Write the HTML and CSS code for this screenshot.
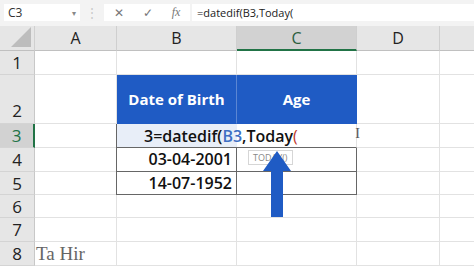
FILE: index.html
```html
<!DOCTYPE html>
<html lang="en">
<head>
    <meta charset="UTF-8">
    <title>Datedif</title>
    <link rel="stylesheet" href="styles.css">
</head>
<body>
    <div class="topbar">
        <div class="namebox">C3 <span class="drop">▾</span></div>
        <div class="dots">⋮</div>
        <div class="buttons">
            <span class="btn">✕</span>
            <span class="btn">✓</span>
            <span class="btn fx">fx</span>
        </div>
        <div class="formula">=datedif(B3,Today(</div>
    </div>

    <div class="sheet">
        <div class="corner"><span class="tri"></span></div>
        <div class="colhead">A</div>
        <div class="colhead">B</div>
        <div class="colhead sel">C</div>
        <div class="colhead">D</div>
        <div class="colhead last"></div>

        <div class="rowhead">1</div>
        <div class="cell"></div><div class="cell"></div><div class="cell"></div><div class="cell"></div><div class="cell last"></div>

        <div class="rowhead tall">2</div>
        <div class="cell"></div>
        <div class="cell head divider">Date of Birth</div>
        <div class="cell head">Age</div>
        <div class="cell"></div><div class="cell last"></div>

        <div class="rowhead sel">3</div>
        <div class="cell"></div>
        <div class="cell edit"><span>3=datedif(</span><span class="ref">B3</span><span>,Today</span><span class="paren">(</span><span class="caret"></span></div>
        <div class="cell edit-c"><span class="ibeam">I</span></div>
        <div class="cell"></div><div class="cell last"></div>

        <div class="rowhead">4</div>
        <div class="cell"></div>
        <div class="cell data">03-04-2001</div>
        <div class="cell data c4">
            <span class="tip">TODAY()</span>
            <svg class="arrow" width="30" height="66" viewBox="0 0 30 66">
                <path d="M15 0 L29 20 L21 20 L21 66 L9 66 L9 20 L1 20 Z" fill="#1f5bc4"/>
            </svg>
        </div>
        <div class="cell"></div><div class="cell last"></div>

        <div class="rowhead">5</div>
        <div class="cell"></div>
        <div class="cell data">14-07-1952</div>
        <div class="cell data"></div>
        <div class="cell"></div><div class="cell last"></div>

        <div class="rowhead">6</div>
        <div class="cell"></div><div class="cell"></div><div class="cell"></div><div class="cell"></div><div class="cell last"></div>

        <div class="rowhead">7</div>
        <div class="cell"></div><div class="cell"></div><div class="cell"></div><div class="cell"></div><div class="cell last"></div>

        <div class="rowhead">8</div>
        <div class="cell sign">Ta Hir</div><div class="cell"></div><div class="cell"></div><div class="cell"></div><div class="cell last"></div>
    </div>
</body>
</html>
```

FILE: styles.css
```css
body {
    margin: 0;
    width: 474px;
    height: 266px;
    overflow: hidden;
    background: #f3f3f3;
    font-family: "Open Sans", "Noto Sans", sans-serif;
}

.topbar {
    display: flex;
    align-items: center;
    height: 22px;
    padding-top: 1px;
    padding-bottom: 3px;
    gap: 0;
}
.namebox {
    margin-left: 4px;
    width: 76px;
    height: 17px;
    background: white;
    font-size: 12px;
    color: #333;
    display: flex;
    align-items: center;
    justify-content: space-between;
    padding: 0 4px;
    box-sizing: border-box;
}
.drop {
    font-size: 8px;
    color: #888;
}
.dots {
    width: 24px;
    text-align: center;
    color: #c8c8c8;
    font-size: 12px;
}
.buttons {
    width: 86px;
    height: 17px;
    background: white;
    display: flex;
    align-items: center;
    justify-content: space-around;
    font-size: 12px;
    color: #777;
}
.fx {
    font-family: "Liberation Serif", serif;
    font-style: italic;
}
.formula {
    flex: 1;
    margin-left: 2px;
    height: 17px;
    background: white;
    font-size: 11px;
    color: #222;
    padding-left: 5px;
    line-height: 17px;
}

.sheet {
    display: grid;
    grid-template-columns: 35px 82px 120px 120px 83px 1fr;
    grid-template-rows: 25px 24px 49px 24px 24px 23px 23px 24px 24px;
    background: white;
}
.corner {
    background: #e6e6e6;
    border-right: 1px solid #d0d0d0;
    border-bottom: 1px solid #c0c0c0;
    position: relative;
}
.tri {
    position: absolute;
    right: 3px;
    bottom: 3px;
    border-left: 20px solid transparent;
    border-bottom: 20px solid #bdbdbd;
}
.colhead {
    background: #e6e6e6;
    border-right: 1px solid #cfcfcf;
    border-bottom: 1px solid #c0c0c0;
    display: flex;
    align-items: center;
    justify-content: center;
    font-size: 16px;
    color: #222;
}
.colhead.sel {
    background: #d2d2d2;
    border-bottom: 2px solid #217346;
    color: #2b5f3e;
}
.colhead.last {
    border-right: none;
}
.rowhead {
    background: #e6e6e6;
    border-right: 1px solid #c8c8c8;
    border-bottom: 1px solid #d4d4d4;
    display: flex;
    align-items: center;
    justify-content: center;
    font-size: 17px;
    color: #222;
}
.rowhead.tall {
    align-items: flex-end;
    padding-bottom: 1px;
}
.rowhead.sel {
    background: #d2d2d2;
    color: #217346;
    border-right: 2px solid #217346;
}
.cell {
    border-right: 1px solid #e2e2e2;
    border-bottom: 1px solid #e2e2e2;
    font-size: 16px;
    white-space: nowrap;
}
.cell.last {
    border-right: none;
}
.cell.head {
    background: #1f5bc4;
    color: white;
    font-weight: bold;
    font-size: 15px;
    display: flex;
    align-items: center;
    justify-content: center;
    border-color: #1f5bc4;
}
.cell.divider {
    border-right: 1px solid #5b86d3;
}
.cell.edit {
    background: #e8eef8;
    border-left: 1px solid #666;
    margin-left: -1px;
    border-right: none;
    border-bottom: 1px solid #666;
    overflow: visible;
    padding-left: 27px;
    display: flex;
    align-items: center;
    font-weight: 600;
    color: #111;
    position: relative;
    z-index: 2;
}
.ref {
    color: #3d6fc4;
}
.paren {
    color: #c0392b;
    font-weight: 400;
}
.caret {
    display: inline-block;
    width: 1px;
    height: 18px;
    background: #222;
}
.cell.edit-c {
    border-right: 1px solid #e2e2e2;
    border-bottom: 1px solid #666;
    position: relative;
}
.ibeam {
    position: absolute;
    right: -4px;
    top: 2px;
    font-size: 14px;
    color: #555;
    font-family: "Liberation Serif", serif;
}
.cell.data {
    border-right: 1px solid #666;
    border-bottom: 1px solid #666;
    border-left: 1px solid #666;
    margin-left: -1px;
    font-weight: 600;
    color: #111;
    text-align: right;
    padding-right: 4px;
    line-height: 23px;
}
.cell.c4 {
    position: relative;
    overflow: visible;
}
.tip {
    position: absolute;
    left: 11px;
    top: 2px;
    height: 13px;
    padding: 0 4px;
    background: white;
    border: 1px solid #d6d6d6;
    font-size: 9px;
    font-weight: 400;
    line-height: 13px;
    color: #888;
}
.arrow {
    position: absolute;
    left: 25px;
    top: 3px;
    z-index: 3;
}
.cell.sign {
    font-family: "Liberation Serif", serif;
    font-size: 19px;
    color: #666;
    line-height: 23px;
    padding-left: 1px;
}
```
